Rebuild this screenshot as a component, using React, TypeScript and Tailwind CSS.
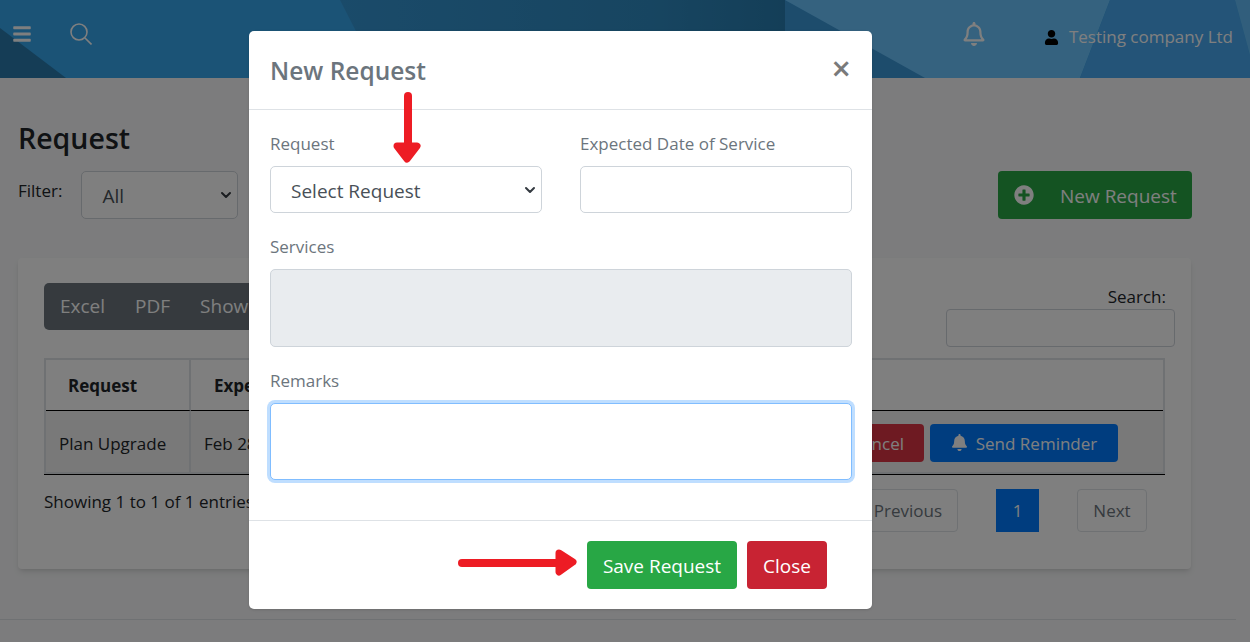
import { FaBars, FaBell, FaPlusCircle, FaRegBell, FaUser } from 'react-icons/fa';
import { ChevronDown } from 'lucide-react';

const font = { fontFamily: '"Open Sans", "Noto Sans", sans-serif' };

const HeaderArt = () => (
	<svg className="absolute inset-0 h-full w-full" viewBox="0 0 1250 78" preserveAspectRatio="none">
		<defs>
			<linearGradient id="mid" x1="0" x2="1" y1="0" y2="0">
				<stop offset="0" stopColor="#3596d4" />
				<stop offset="0.7" stopColor="#2f8bc2" />
				<stop offset="1" stopColor="#287db0" />
			</linearGradient>
		</defs>
		<rect width="1250" height="78" fill="#36a6ec" />
		<polygon points="0,28 66,78 0,78" fill="#2a7aac" />
		<polygon points="340,0 785,0 785,78 380,78" fill="url(#mid)" />
		<polygon points="785,0 930,78 785,78" fill="#3a98d8" />
		<polygon points="785,0 1110,0 1080,78 925,78" fill="#6ac4fe" />
		<polygon points="1110,0 1235,0 1250,55 1250,78 1080,78" fill="#48a8f0" />
		<polygon points="1235,0 1250,0 1250,55" fill="#62bdf8" />
	</svg>
);

const SelectBox = ({ label, className }: { label: string; className: string }) => (
	<div className={`flex items-center justify-between rounded-[5px] border border-[#ced4da] bg-white pr-[3px] pl-5 ${className}`}>
		<span className="pt-[3px] text-[19px] text-[#495057]">{label}</span>
		<ChevronDown size={16} strokeWidth={3} className="text-[#343a40]" />
	</div>
);

const Background = () => (
	<div className="flex min-h-[642px] flex-col bg-[#f8f9fa] text-[#212529]">
		<header className="relative flex h-[78px] items-center text-white">
			<HeaderArt />
			<FaBars size={20} className="relative ml-3 -mt-[10px]" />
			<svg className="relative ml-[38px] -mt-[10px] h-[22px] w-[22px]" viewBox="0 0 22 22" fill="none" stroke="currentColor" strokeWidth="1.6">
				<circle cx="9" cy="9" r="8" />
				<path d="M15 15L21.5 21.5" />
			</svg>
			<FaRegBell size={24} className="relative ml-auto -mt-[10px]" />
			<FaUser size={15} className="relative ml-[58px] -mt-[4px] text-black" />
			<span className="relative ml-[10px] mr-[17px] -mt-[4px] text-[17px]">Testing company Ltd</span>
		</header>

		<main className="flex flex-1 flex-col px-[18px]">
			<h1 className="mt-[41px] text-[28.5px] leading-[38px] font-semibold">Request</h1>
			<div className="mt-[14px] flex items-start justify-between pr-[40px]">
				<div className="flex items-start gap-[19px]">
					<span className="mt-[7px] text-[17px]">Filter:</span>
					<SelectBox label="All" className="h-[48px] w-[157px]" />
				</div>
				<button className="flex h-[48px] w-[194px] items-center rounded-[4px] bg-[#28a745] pl-[16px] text-[19px] text-white">
					<FaPlusCircle size={20} />
					<span className="ml-[26px] pt-[3px]">New Request</span>
				</button>
			</div>

			<section className="mt-[39px] mr-[41px] h-[311px] rounded-[4px] bg-white px-[26px] pt-[25px] shadow-md">
				<div className="flex items-start justify-between">
					<div className="flex h-[47px] w-[300px] items-center gap-[30px] rounded-[5px] bg-[#6c757d] px-4 text-[19px] text-white">
						<span>Excel</span>
						<span>PDF</span>
						<span>Show</span>
					</div>
					<div className="-mr-[10px] flex flex-col items-end">
						<span className="mr-[9px] pt-[1px] text-[17px] leading-[25px]">Search:</span>
						<div className="h-[38px] w-[229px] rounded-[4px] border border-[#ced4da]"></div>
					</div>
				</div>
				<div className="mt-[11px] w-[1121px] border-b border-black">
					<div className="flex h-[53px] border-2 border-b-0 border-[#dee2e6]">
						<div className="flex w-[145px] items-center border-r-2 border-b border-r-[#dee2e6] border-b-black pt-[2px] pl-[22px] text-[17px] font-bold">Request</div>
						<div className="flex flex-1 items-center border-b border-black pt-[2px] pl-[23px] text-[17px] font-bold">Expected Date</div>
					</div>
					<div className="flex h-[63px] border-x-2 border-b-2 border-[#dee2e6] bg-[#f2f2f2] text-[17px]">
						<div className="flex w-[145px] items-center border-r-2 border-[#dee2e6] pt-[4px] pl-[13px]">Plan Upgrade</div>
						<div className="flex flex-1 items-center pl-[13px]">
							<span className="pt-[4px]">Feb 28</span>
							<div className="mt-[2px] mr-[45px] ml-auto flex gap-[6px]">
								<button className="h-[38px] rounded-[4px] bg-[#dc3545] px-[20px] pt-[2px] text-[17px] text-white">Cancel</button>
								<button className="flex h-[38px] w-[188px] items-center justify-center gap-[8px] rounded-[4px] bg-[#007bff] text-[17px] text-white">
									<FaBell size={17} />
									<span className="pt-[2px]">Send Reminder</span>
								</button>
							</div>
						</div>
					</div>
				</div>
				<div className="mt-[14px] flex items-start justify-between pr-[18px]">
					<span className="text-[17px]">Showing 1 to 1 of 1 entries</span>
					<div className="flex items-center text-[17px] text-[#6c757d]">
						<span className="flex h-[43px] w-[100px] items-center justify-center rounded-[4px] border border-[#dee2e6]">Previous</span>
						<span className="ml-[38px] flex h-[43px] w-[43px] items-center justify-center bg-[#007bff] text-white">1</span>
						<span className="ml-[38px] flex h-[43px] w-[70px] items-center justify-center rounded-[4px] border border-[#dee2e6]">Next</span>
					</div>
				</div>
			</section>
			<div className="-mx-[18px] mt-[50px] mr-[-4px] border-b border-[#dee2e6]"></div>
		</main>
	</div>
);

const Label = ({ children }: { children: string }) => (
	<label className="block text-[17px] leading-[24px] text-[#6c757d]">{children}</label>
);

const NewRequestModal = () => (
	<div className="absolute inset-0 bg-black/50 pt-[31px] pl-[249px]">
		<div className="relative h-[578px] w-[623px] rounded-[5px] bg-white shadow-sm">
			<div className="flex h-[79px] items-center justify-between border-b border-[#dee2e6] pr-[21px] pl-[21px]">
				<h2 className="pt-[2px] text-[24.5px] font-semibold text-[#6c757d]">New Request</h2>
				<span className="-mt-[5px] text-[34px] leading-none font-semibold text-[#7a7a7a]">×</span>
			</div>
			<div className="pt-[22px] pr-[20px] pl-[21px]">
				<div className="flex gap-[38px]">
					<div className="w-[272px]">
						<Label>Request</Label>
						<SelectBox label="Select Request" className="mt-[10px] h-[47px]" />
					</div>
					<div className="w-[272px]">
						<Label>Expected Date of Service</Label>
						<div className="mt-[10px] h-[47px] rounded-[5px] border border-[#ced4da] bg-white"></div>
					</div>
				</div>
				<div className="mt-[22px]">
					<Label>Services</Label>
					<div className="mt-[10px] h-[78px] rounded-[5px] border border-[#ced4da] bg-[#e9ecef]"></div>
				</div>
				<div className="mt-[22px]">
					<Label>Remarks</Label>
					<div className="mt-[10px] h-[77px] rounded-[5px] border border-[#80bdff] bg-white shadow-[0_0_0_3px_#bfdeff]"></div>
				</div>
			</div>
			<div className="mt-[40px] flex justify-end gap-[10px] border-t border-[#dee2e6] pt-[20px] pr-[45px]">
				<button className="h-[48px] w-[150px] rounded-[4px] bg-[#28a745] pt-[2px] text-[19px] text-white">Save Request</button>
				<button className="h-[48px] w-[80px] rounded-[4px] bg-[#c82333] pt-[2px] text-[19px] text-white">Close</button>
			</div>

			{/* annotation arrows */}
			<svg className="absolute top-[60px] left-[140px] h-[76px] w-[36px]" viewBox="0 0 36 76" fill="none">
				<path d="M19 5V62" stroke="#ed1c24" strokeWidth="8" strokeLinecap="round" />
				<path d="M8 55L18 68L28 55Z" stroke="#ed1c24" strokeWidth="7" strokeLinecap="round" strokeLinejoin="round" fill="#ed1c24" />
			</svg>
			<svg className="absolute top-[513px] left-[206px] h-[36px] w-[126px]" viewBox="0 0 126 36" fill="none">
				<path d="M7 19H108" stroke="#ed1c24" strokeWidth="8" strokeLinecap="round" />
				<path d="M104 9L118 18L104 28Z" stroke="#ed1c24" strokeWidth="7" strokeLinecap="round" strokeLinejoin="round" fill="#ed1c24" />
			</svg>
		</div>
	</div>
);

const App = () => (
	<div className="relative h-[642px] overflow-hidden" style={font}>
		<Background />
		<NewRequestModal />
	</div>
);

export default App;
